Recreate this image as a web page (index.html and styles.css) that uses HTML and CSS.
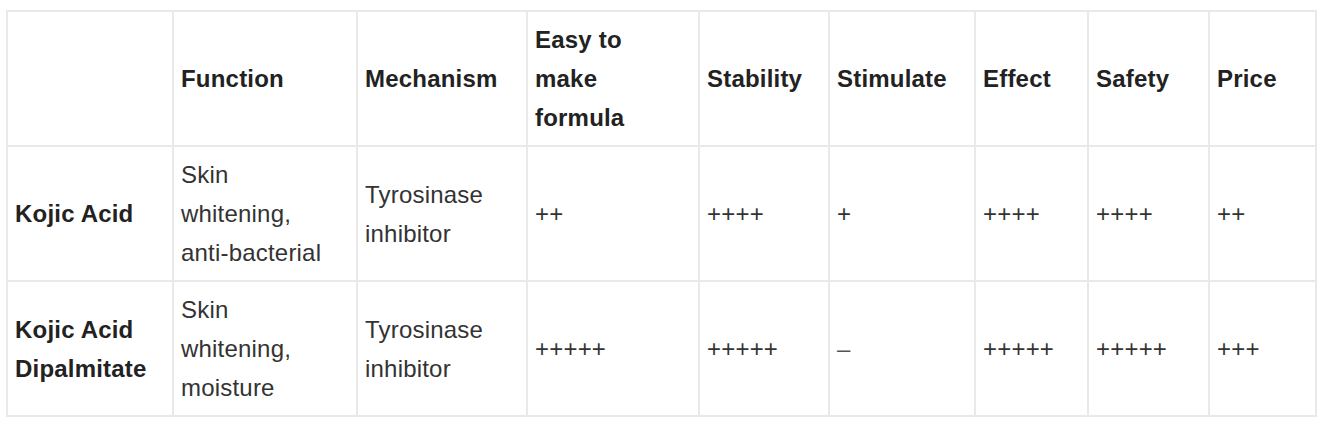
FILE: index.html
```html
<!DOCTYPE html>
<html>
<head>
<meta charset="utf-8">
<link rel="stylesheet" href="styles.css">
</head>
<body>
<table class="cmp">
  <colgroup>
    <col class="c1"><col class="c2"><col class="c3"><col class="c4"><col class="c5"><col class="c6"><col class="c7"><col class="c8"><col class="c9">
  </colgroup>
  <thead>
    <tr>
      <th></th>
      <th>Function</th>
      <th>Mechanism</th>
      <th>Easy to make formula</th>
      <th>Stability</th>
      <th>Stimulate</th>
      <th>Effect</th>
      <th>Safety</th>
      <th>Price</th>
    </tr>
  </thead>
  <tbody>
    <tr>
      <th>Kojic Acid</th>
      <td>Skin whitening, anti-bacterial</td>
      <td>Tyrosinase inhibitor</td>
      <td>++</td>
      <td>++++</td>
      <td>+</td>
      <td>++++</td>
      <td>++++</td>
      <td>++</td>
    </tr>
    <tr>
      <th>Kojic Acid Dipalmitate</th>
      <td>Skin whitening, moisture</td>
      <td>Tyrosinase inhibitor</td>
      <td>+++++</td>
      <td>+++++</td>
      <td class="dash">–</td>
      <td>+++++</td>
      <td>+++++</td>
      <td>+++</td>
    </tr>
  </tbody>
</table>
</body>
</html>
```

FILE: styles.css
```css
html, body {
  margin: 0;
  background: #ffffff;
}
body {
  padding: 10px 0 0 6px;
  font-family: "Liberation Sans", Arial, sans-serif;
  font-size: 24px;
  line-height: 39px;
  color: #333333;
}
.cmp {
  border-collapse: collapse;
  table-layout: fixed;
  width: 1310px;
}
.cmp th,
.cmp td {
  border: 2px solid #e9e9e9;
  padding: 8px 20px 8px 7px;
  vertical-align: middle;
  text-align: left;
  letter-spacing: 0.2px;
}
.cmp th {
  font-weight: bold;
  color: #222222;
}
.cmp .dash {
  color: #555555;
}
.c1 { width: 166px; }
.c2 { width: 184px; }
.c3 { width: 170px; }
.c4 { width: 172px; }
.c5 { width: 130px; }
.c6 { width: 146px; }
.c7 { width: 113px; }
.c8 { width: 121px; }
.c9 { width: 107px; }
```
